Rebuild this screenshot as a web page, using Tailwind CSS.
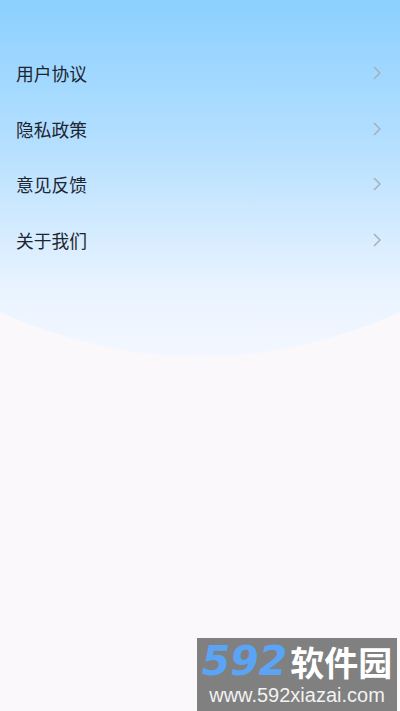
<!DOCTYPE html>
<html lang="zh">
<head>
<meta charset="UTF-8" />
<meta name="viewport" content="width=device-width, initial-scale=1" />
<title>设置</title>
<script src="https://cdn.jsdelivr.net/npm/@tailwindcss/browser@4"></script>
</head>
<body class="bg-[#faf8fb] font-['Noto_Sans_CJK_SC','Noto_Sans',sans-serif]">
<div class="relative w-[400px] h-[711px] overflow-hidden">

  <!-- 顶部渐变背景 -->
  <svg class="absolute top-0 left-0" width="400" height="358" viewBox="0 0 400 358">
    <defs>
      <linearGradient id="sky" x1="0" y1="0" x2="0" y2="1">
        <stop offset="0" stop-color="#8bd0ff" />
        <stop offset="0.4" stop-color="#b4dfff" />
        <stop offset="0.8" stop-color="#e8f3ff" />
        <stop offset="1" stop-color="#f4f7ff" />
      </linearGradient>
    </defs>
    <path d="M0 0H400V312Q200 402 0 312Z" fill="url(#sky)" />
  </svg>

  <!-- 菜单 -->
  <ul class="relative pt-[46px] pl-4 pr-[19px] text-[17.75px] text-[#1d2530]">
    <li class="h-[55.5px] flex items-center justify-between">
      <span>用户协议</span>
      <svg class="-mt-[1px]" width="8" height="14" viewBox="0 0 8 14" fill="none" stroke="#a6afba" stroke-width="1.5"><path d="M1 1l6 6-6 6" /></svg>
    </li>
    <li class="h-[55.5px] flex items-center justify-between">
      <span>隐私政策</span>
      <svg class="-mt-[1px]" width="8" height="14" viewBox="0 0 8 14" fill="none" stroke="#a6afba" stroke-width="1.5"><path d="M1 1l6 6-6 6" /></svg>
    </li>
    <li class="h-[55.5px] flex items-center justify-between">
      <span>意见反馈</span>
      <svg class="-mt-[1px]" width="8" height="14" viewBox="0 0 8 14" fill="none" stroke="#a6afba" stroke-width="1.5"><path d="M1 1l6 6-6 6" /></svg>
    </li>
    <li class="h-[55.5px] flex items-center justify-between">
      <span>关于我们</span>
      <svg class="-mt-[1px]" width="8" height="14" viewBox="0 0 8 14" fill="none" stroke="#a6afba" stroke-width="1.5"><path d="M1 1l6 6-6 6" /></svg>
    </li>
  </ul>

  <!-- 水印 -->
  <div class="absolute left-[197px] top-[638px] w-[200px] h-[73px] bg-[#808080] flex flex-col items-center">
    <div class="flex items-center h-[46px] pt-[1px] leading-none">
      <span class="text-[41px] font-bold italic text-[#5ba4f5] font-['DejaVu_Sans',sans-serif]">592</span>
      <span class="text-[34px] font-bold text-white ml-[3px]">软件园</span>
    </div>
    <div class="text-[20px] leading-[23px] text-[#f2f2f2] font-['Liberation_Sans',sans-serif]">www.592xiazai.com</div>
  </div>
</div>
</body>
</html>
